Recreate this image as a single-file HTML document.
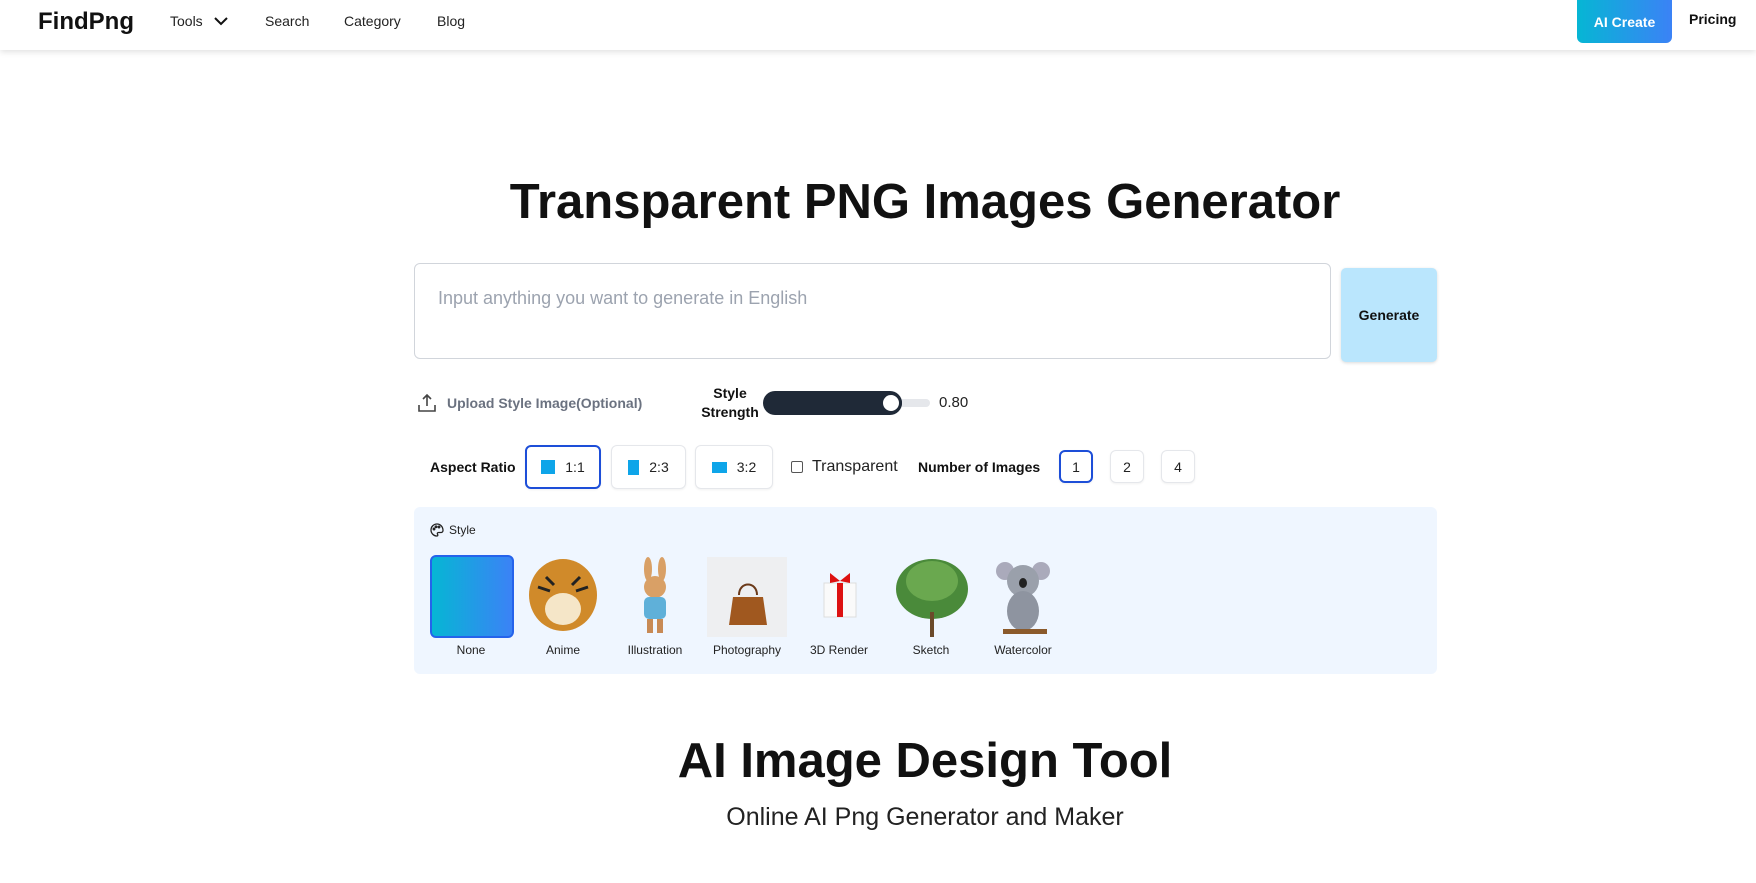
<!DOCTYPE html>
<html><head><meta charset="utf-8"><style>
*{box-sizing:border-box;margin:0;padding:0}
body{width:1756px;height:883px;background:#fff;font-family:"Liberation Sans",sans-serif;color:#111;position:relative;overflow:hidden}
.a{position:absolute}
.hdr{left:0;top:0;width:1756px;height:50px;background:#fff;box-shadow:0 2px 6px rgba(0,0,0,.12)}
.nav{font-size:14px;color:#222;top:13px}
.btn{border:1px solid #e5e7eb;border-radius:6px;background:#fff;box-shadow:0 1px 2px rgba(0,0,0,.06);display:flex;align-items:center;justify-content:center;font-size:14px;color:#222}
.sq{background:#0ea5e9;display:inline-block;margin-right:10px}
.lbl{font-size:12px;color:#222;text-align:center;width:92px;top:643px}
</style></head><body>
<div class="a hdr"></div>
<div class="a" style="left:38px;top:8px;font-size:24px;font-weight:bold">FindPng</div>
<div class="a nav" style="left:170px">Tools</div>
<svg class="a" style="left:213px;top:14px" width="16" height="14" viewBox="0 0 16 14"><path d="M2 4l6 6 6-6" stroke="#111" stroke-width="2" fill="none"/></svg>
<div class="a nav" style="left:265px">Search</div>
<div class="a nav" style="left:344px">Category</div>
<div class="a nav" style="left:437px">Blog</div>
<div class="a" style="left:1577px;top:0;width:95px;height:43px;border-radius:0 0 6px 6px;background:linear-gradient(90deg,#06b6d4,#3b82f6);color:#fff;font-weight:bold;font-size:14px;display:flex;align-items:center;justify-content:center">AI Create</div>
<div class="a" style="left:1689px;top:11px;font-size:14px;font-weight:bold">Pricing</div>

<div class="a" style="left:0;width:1850px;top:174px;text-align:center;font-size:49px;font-weight:bold">Transparent PNG Images Generator</div>

<div class="a" style="left:414px;top:263px;width:917px;height:96px;border:1px solid #d1d5db;border-radius:6px"></div>
<div class="a" style="left:438px;top:288px;font-size:18px;color:#9ca3af">Input anything you want to generate in English</div>
<div class="a" style="left:1341px;top:268px;width:96px;height:94px;background:#bae6fd;border-radius:5px;box-shadow:0 1px 3px rgba(0,0,0,.15);display:flex;align-items:center;justify-content:center;font-weight:bold;font-size:14px">Generate</div>

<svg class="a" style="left:417px;top:393px" width="20" height="20" viewBox="0 0 20 20" fill="none" stroke="#444" stroke-width="1.6"><path d="M10 13V2M6 6l4-4 4 4M2 12v6h16v-6"/></svg>
<div class="a" style="left:447px;top:395px;font-size:14px;font-weight:bold;color:#6b7280">Upload Style Image(Optional)</div>
<div class="a" style="left:690px;top:384px;width:80px;text-align:center;font-size:14px;font-weight:bold;line-height:19px">Style<br>Strength</div>
<div class="a" style="left:763px;width:167px;height:8px;background:#e5e7eb;border-radius:4px;top:399px"></div>
<div class="a" style="left:763px;top:391px;width:139px;height:24px;background:#1f2937;border-radius:12px"></div>
<div class="a" style="left:880px;top:392px;width:22px;height:22px;background:#fff;border:3px solid #1f2937;border-radius:50%"></div>
<div class="a" style="left:939px;top:394px;font-size:15px;color:#222">0.80</div>

<div class="a" style="left:430px;top:459px;font-size:14px;font-weight:bold">Aspect Ratio</div>
<div class="a btn" style="left:525px;top:445px;width:76px;height:44px;border:2px solid #1d4ed8"><span class="sq" style="width:14px;height:14px"></span>1:1</div>
<div class="a btn" style="left:611px;top:445px;width:75px;height:44px"><span class="sq" style="width:11px;height:15px"></span>2:3</div>
<div class="a btn" style="left:695px;top:445px;width:78px;height:44px"><span class="sq" style="width:15px;height:11px"></span>3:2</div>
<div class="a" style="left:791px;top:461px;width:12px;height:12px;border:1px solid #555;border-radius:2px"></div>
<div class="a" style="left:812px;top:458px;font-size:16px;color:#222">Transparent</div>
<div class="a" style="left:918px;top:459px;font-size:14px;font-weight:bold">Number of Images</div>
<div class="a btn" style="left:1059px;top:450px;width:34px;height:33px;border:2px solid #1d4ed8">1</div>
<div class="a btn" style="left:1110px;top:450px;width:34px;height:33px">2</div>
<div class="a btn" style="left:1161px;top:450px;width:34px;height:33px">4</div>

<div class="a" style="left:414px;top:507px;width:1023px;height:167px;background:#eff6ff;border-radius:6px"></div>
<svg class="a" style="left:430px;top:523px" width="14" height="14" viewBox="0 0 14 14" fill="none" stroke="#222" stroke-width="1.3"><path d="M7 1a6 6 0 1 0 0 12c1 0 1-1 .5-1.7-.5-.8 0-1.8 1-1.8H11a2 2 0 0 0 2-2C13 3.6 10.3 1 7 1z"/><circle cx="4" cy="6" r=".8"/><circle cx="6" cy="3.8" r=".8"/><circle cx="9" cy="4" r=".8"/></svg>
<div class="a" style="left:449px;top:523px;font-size:12px;color:#222">Style</div>
<div class="a" style="left:430px;top:555px;width:84px;height:83px;border:2px solid #2563eb;border-radius:6px;background:linear-gradient(90deg,#06b6d4,#3b82f6)"></div>
<svg class="a" style="left:526px;top:557px" width="74" height="80"><ellipse cx="37" cy="38" rx="34" ry="36" fill="#d08a2a"/><ellipse cx="37" cy="52" rx="18" ry="16" fill="#f5e6c8"/><path d="M12 30l12 4M62 30l-12 4M20 20l8 8M54 20l-8 8" stroke="#222" stroke-width="3"/></svg>
<svg class="a" style="left:634px;top:557px" width="42" height="80"><ellipse cx="14" cy="12" rx="4" ry="12" fill="#d9a066"/><ellipse cx="28" cy="12" rx="4" ry="12" fill="#d9a066"/><circle cx="21" cy="30" r="11" fill="#d9a066"/><rect x="10" y="40" width="22" height="22" rx="5" fill="#5fb0d9"/><rect x="13" y="62" width="6" height="14" fill="#c88a55"/><rect x="23" y="62" width="6" height="14" fill="#c88a55"/></svg>
<div class="a" style="left:707px;top:557px;width:80px;height:80px;background:#eeeff1"></div>
<svg class="a" style="left:727px;top:583px" width="42" height="46"><path d="M12 12c0-14 18-14 18 0" stroke="#6b3a1a" stroke-width="2" fill="none"/><path d="M6 14h30l4 28H2z" fill="#a0581f"/></svg>
<svg class="a" style="left:814px;top:565px" width="52" height="60"><rect x="10" y="18" width="32" height="34" fill="#fafafa" stroke="#ddd"/><rect x="23" y="18" width="6" height="34" fill="#d11"/><path d="M26 16l-10-8v10zM26 16l10-8v10z" fill="#d11"/></svg>
<svg class="a" style="left:893px;top:557px" width="78" height="82"><ellipse cx="39" cy="32" rx="36" ry="30" fill="#4a8a3a"/><ellipse cx="39" cy="24" rx="26" ry="20" fill="#6aa84f"/><rect x="37" y="55" width="4" height="25" fill="#6b4a2a"/></svg>
<svg class="a" style="left:995px;top:557px" width="58" height="82"><circle cx="10" cy="14" r="9" fill="#aab"/><circle cx="46" cy="14" r="9" fill="#aab"/><circle cx="28" cy="24" r="16" fill="#9aa0ab"/><ellipse cx="28" cy="54" rx="16" ry="20" fill="#8e94a0"/><ellipse cx="28" cy="26" rx="4" ry="5" fill="#222"/><rect x="8" y="72" width="44" height="5" fill="#8b5a2b"/></svg>
<div class="a lbl" style="left:425px">None</div>
<div class="a lbl" style="left:517px">Anime</div>
<div class="a lbl" style="left:609px">Illustration</div>
<div class="a lbl" style="left:701px">Photography</div>
<div class="a lbl" style="left:793px">3D Render</div>
<div class="a lbl" style="left:885px">Sketch</div>
<div class="a lbl" style="left:977px">Watercolor</div>

<div class="a" style="left:0;width:1850px;top:733px;text-align:center;font-size:49px;font-weight:bold">AI Image Design Tool</div>
<div class="a" style="left:0;width:1850px;top:803px;text-align:center;font-size:25px;color:#222">Online AI Png Generator and Maker</div>
</body></html>
